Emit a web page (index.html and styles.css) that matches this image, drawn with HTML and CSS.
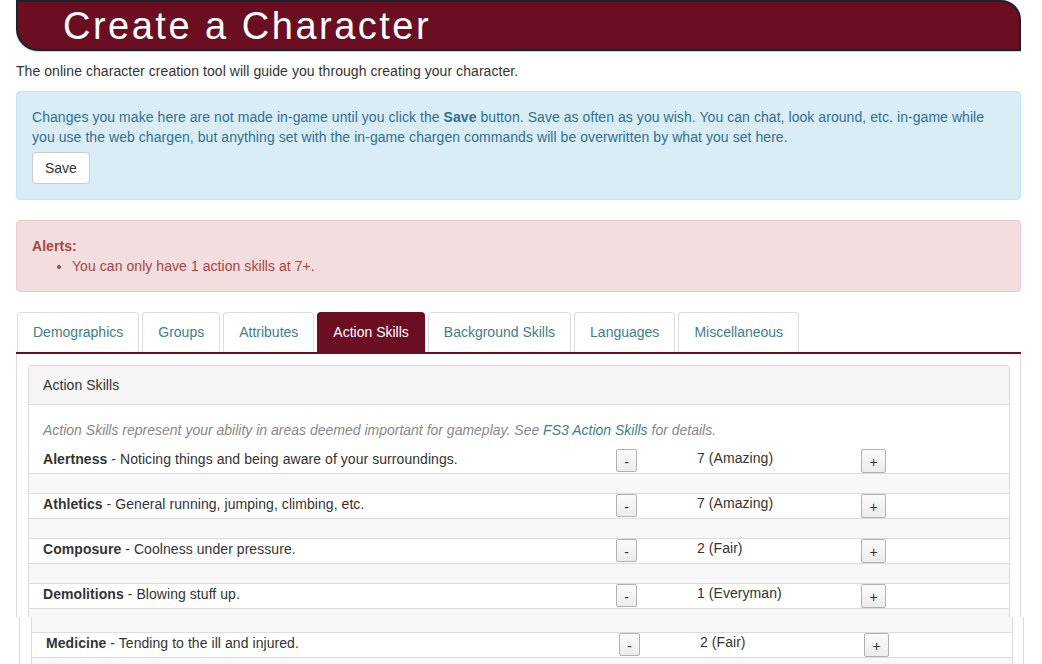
FILE: index.html
```html
<!DOCTYPE html>
<html lang="en">
<head>
<meta charset="utf-8">
<title>Create a Character</title>
<link rel="stylesheet" href="styles.css">
</head>
<body>
<div class="page">
  <header class="site-header">
    <h1 class="site-title">Create a Character</h1>
  </header>

  <p class="intro">The online character creation tool will guide you through creating your character.</p>

  <div class="alert alert-info">
    <p>Changes you make here are not made in-game until you click the <b>Save</b> button. Save as often as you wish. You can chat, look around, etc. in-game while you use the web chargen, but anything set with the in-game chargen commands will be overwritten by what you set here.</p>
    <button class="btn-save" type="button">Save</button>
  </div>

  <div class="alert alert-danger">
    <b>Alerts:</b>
    <ul class="alert-list">
      <li>You can only have 1 action skills at 7+.</li>
    </ul>
  </div>

  <ul class="tabs">
    <li class="tab"><a href="#">Demographics</a></li>
    <li class="tab"><a href="#">Groups</a></li>
    <li class="tab"><a href="#">Attributes</a></li>
    <li class="tab active"><a href="#">Action Skills</a></li>
    <li class="tab"><a href="#">Background Skills</a></li>
    <li class="tab"><a href="#">Languages</a></li>
    <li class="tab"><a href="#">Miscellaneous</a></li>
  </ul>

  <div class="tab-content">
    <div class="panel">
      <div class="panel-heading">Action Skills</div>
      <div class="panel-body">
        <p class="help">Action Skills represent your ability in areas deemed important for gameplay. See <a href="#">FS3 Action Skills</a> for details.</p>
      </div>
      <div class="skills">
        <div class="row skill-row">
          <div class="cell desc"><b>Alertness</b> - Noticing things and being aware of your surroundings.</div>
          <div class="cell"><button class="step minus" type="button">-</button></div>
          <div class="cell value">7 (Amazing)</div>
          <div class="cell"><button class="step plus" type="button">+</button></div>
        </div>
        <div class="row spacer-row"></div>
        <div class="row skill-row">
          <div class="cell desc"><b>Athletics</b> - General running, jumping, climbing, etc.</div>
          <div class="cell"><button class="step minus" type="button">-</button></div>
          <div class="cell value">7 (Amazing)</div>
          <div class="cell"><button class="step plus" type="button">+</button></div>
        </div>
        <div class="row spacer-row"></div>
        <div class="row skill-row">
          <div class="cell desc"><b>Composure</b> - Coolness under pressure.</div>
          <div class="cell"><button class="step minus" type="button">-</button></div>
          <div class="cell value">2 (Fair)</div>
          <div class="cell"><button class="step plus" type="button">+</button></div>
        </div>
        <div class="row spacer-row"></div>
        <div class="row skill-row">
          <div class="cell desc"><b>Demolitions</b> - Blowing stuff up.</div>
          <div class="cell"><button class="step minus" type="button">-</button></div>
          <div class="cell value">1 (Everyman)</div>
          <div class="cell"><button class="step plus" type="button">+</button></div>
        </div>
        <div class="row spacer-row spacer-cut"></div>
      </div>
    </div>
  </div>

  <div class="tab-content tab-content-cont">
    <div class="panel panel-cont">
      <div class="skills">
        <div class="row spacer-row spacer-top"></div>
        <div class="row skill-row">
          <div class="cell desc"><b>Medicine</b> - Tending to the ill and injured.</div>
          <div class="cell"><button class="step minus" type="button">-</button></div>
          <div class="cell value">2 (Fair)</div>
          <div class="cell"><button class="step plus" type="button">+</button></div>
        </div>
        <div class="row spacer-row"></div>
      </div>
    </div>
  </div>
</div>
</body>
</html>
```

FILE: styles.css
```css
* {
  box-sizing: border-box;
}

body {
  margin: 0;
  font-family: "Liberation Sans", Arial, Helvetica, sans-serif;
  font-size: 14px;
  line-height: 20px;
  letter-spacing: 0.06px;
  color: #333;
  background: #fff;
}

.page {
  margin: 0 21px 0 16px;
}

/* Header */
.site-header {
  height: 51px;
  background: #6b0e22;
  border: 2px solid #15242e;
  border-radius: 0 20px 0 22px;
  box-shadow: 0 1px 1px rgba(30, 50, 65, 0.25);
  padding-left: 45px;
}

.site-title {
  margin: 0;
  font-size: 38px;
  line-height: 48px;
  font-weight: normal;
  letter-spacing: 2.5px;
  color: #fff;
}

.intro {
  margin: 10px 0;
}

/* Alerts */
.alert {
  border: 1px solid transparent;
  border-radius: 4px;
  padding: 15px;
  margin-bottom: 20px;
}

.alert-info {
  background: #d9edf7;
  border-color: #bce8f1;
  color: #31708f;
}

.alert-info p {
  margin: 0;
}

.btn-save {
  display: block;
  margin-top: 5px;
  height: 32px;
  padding: 0 12px;
  background: #fff;
  border: 1px solid #ccc;
  border-radius: 4px;
  font: inherit;
  color: #333;
}

.alert-danger {
  background: #f2dede;
  border-color: #ebccd1;
  color: #a94442;
}

.alert-list {
  margin: 0;
  padding-left: 40px;
}

/* Tabs */
.tabs {
  display: flex;
  margin: 0;
  padding: 0 0 0 1px;
  list-style: none;
  border-bottom: 2px solid #6b0e22;
  letter-spacing: 0;
}

.tab {
  margin-right: 3px;
}

.tab a {
  display: block;
  padding: 9px 15px 10px;
  border: 1px solid #ddd;
  border-bottom: 0;
  border-radius: 4px 4px 0 0;
  color: #3f8083;
  text-decoration: none;
}

.tab.active a {
  background: #6b0e22;
  border-color: #6b0e22;
  color: #fff;
}

/* Tab content */
.tab-content {
  border-left: 1px solid #ddd;
  border-right: 1px solid #ddd;
  padding: 11px 10px 0 11px;
}

.tab-content-cont {
  padding-top: 0;
  margin-left: 3px;
  margin-right: -3px;
}

.panel {
  border: 1px solid #ddd;
  border-bottom: 0;
  border-radius: 4px 4px 0 0;
}

.panel-cont {
  border-top: 0;
  border-radius: 0;
}

.panel-heading {
  background: #f5f5f5;
  border-bottom: 1px solid #ddd;
  border-radius: 3px 3px 0 0;
  padding: 9px 14px;
}

.panel-body {
  padding: 15px 14px 0;
}

.help {
  margin: 0 0 9px;
  font-style: italic;
  letter-spacing: 0;
  color: #888;
}

.help a {
  color: #3f8083;
  text-decoration: none;
}

/* Skill rows */
.row {
  box-sizing: content-box;
}

.row + .row {
  border-top: 1px solid #ddd;
}

.skill-row {
  display: grid;
  grid-template-columns: 572px 81px 164px 1fr;
  height: 24px;
  background: #fff;
}

.spacer-row {
  height: 19px;
  background: #f7f7f7;
}

.spacer-cut {
  height: 8px;
}

.spacer-top {
  height: 15px;
}

.cell {
  padding-left: 15px;
}

.cell.desc {
  padding-left: 14px;
}

.value {
  line-height: 19px;
}

.step {
  display: block;
  padding: 0;
  border: 1px solid #b0b0b0;
  border-radius: 2px;
  background: linear-gradient(#fbfbfb, #ececec);
  font-family: "Liberation Sans", Arial, sans-serif;
  font-size: 14px;
  line-height: 1;
  color: #333;
}

.step.minus {
  width: 21px;
  height: 23px;
  padding-top: 3px;
}

.step.plus {
  width: 25px;
  height: 24px;
  padding-top: 2px;
}
```
